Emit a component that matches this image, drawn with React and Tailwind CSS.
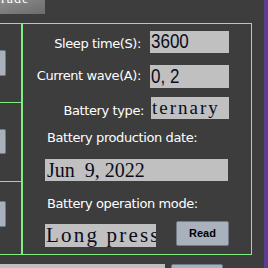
export default function App() {
  return (
    <div className="w-[268px] h-[268px] overflow-hidden bg-[#3d3d3d] flex font-['DejaVu_Sans',sans-serif]">
      <div className="w-[264px] flex flex-col">
        <div className="h-[23px] shrink-0">
          <div className="w-[45px] h-[14px] bg-gradient-to-br from-[#8c8c8c] to-[#6c6c6c] overflow-hidden">
            <div className="-mt-[8px] pl-[1px] text-white text-[14px] leading-[14px] tracking-[1px] font-['Liberation_Serif',serif]">rade</div>
          </div>
        </div>
        <div className="w-[252px] h-[232px] shrink-0 border-t border-r border-b border-[#80ee80] flex">
          <div className="w-[23px] border-r-2 border-[#80ee80] flex flex-col">
            <div className="h-[79px] border-b border-[#80ee80]">
              <div className="mt-[26px] h-[26px] w-[6px] bg-[#a9b1bd] border-y border-r border-[#727b88] rounded-r-[2px]" />
            </div>
            <div className="h-[79px] border-b border-[#80ee80]">
              <div className="mt-[26px] h-[25px] w-[6px] bg-[#a9b1bd] border-y border-r border-[#727b88] rounded-r-[2px]" />
            </div>
            <div className="flex-1">
              <div className="mt-[19px] h-[26px] w-[6px] bg-[#a9b1bd] border-y border-r border-[#727b88] rounded-r-[2px]" />
            </div>
          </div>
          <div className="flex-1 flex flex-col text-white text-[13px] tracking-[-0.4px]">
            <div className="mt-[7px] flex items-start h-[22px]">
              <div className="w-[118px] mt-[3px] text-right leading-[20px] whitespace-nowrap">Sleep time(S):</div>
              <div className="ml-[9px] w-[79px] h-[22px] bg-[#c0c0c0] text-[#0c0c1c] pl-[1px] text-[17px] leading-[22px] tracking-normal font-['Liberation_Sans',sans-serif]">
                <span className="inline-block scale-y-[1.2]">3600</span>
              </div>
            </div>
            <div className="mt-[12px] flex items-start h-[23px]">
              <div className="w-[118px] mt-[1px] text-right leading-[20px] whitespace-nowrap">Current wave(A):</div>
              <div className="ml-[9px] w-[79px] h-[23px] bg-[#c0c0c0] text-[#0c0c1c] pl-[1px] text-[17px] leading-[23px] tracking-normal font-['Liberation_Sans',sans-serif]">
                <span className="inline-block scale-y-[1.2] whitespace-pre">0, 2</span>
              </div>
            </div>
            <div className="mt-[9px] flex items-start h-[22px]">
              <div className="w-[121px] mt-[4px] text-right leading-[20px] whitespace-nowrap">Battery type:</div>
              <div className="ml-[7px] w-[78px] h-[22px] bg-[#c0c0c0] text-[#0c0c1c] pl-[1px] text-[19px] leading-[22px] tracking-[2px] font-['Liberation_Serif',serif] overflow-hidden whitespace-nowrap">ternary</div>
            </div>
            <div className="mt-[9px] pl-[24px] leading-[20px] whitespace-nowrap">Battery production date:</div>
            <div className="mt-[11px] ml-[22px] w-[183px] h-[22px] bg-[#c0c0c0] text-[#0c0c1c] pl-[2px] text-[20px] leading-[22px] tracking-normal font-['Liberation_Serif',serif] whitespace-pre overflow-hidden">Jun  9, 2022</div>
            <div className="mt-[13px] pl-[24px] leading-[20px] whitespace-nowrap">Battery operation mode:</div>
            <div className="mt-[7px] flex items-start">
              <div className="ml-[22px] mt-[3px] w-[111px] h-[23px] bg-[#c0c0c0] text-[#0c0c1c] pl-[1px] text-[21px] leading-[23px] tracking-[2.2px] font-['Liberation_Serif',serif] whitespace-pre overflow-hidden">Long press</div>
              <div className="ml-[20px] w-[53px] h-[25px] bg-[#a9b1bd] border border-[#727b88] rounded-[2px] flex items-center justify-center text-black text-[11px] font-bold tracking-normal font-['Liberation_Sans',sans-serif]">Read</div>
            </div>
          </div>
        </div>
        <div className="mt-[9px] flex">
          <div className="w-[165px] h-[20px] bg-[#c0c0c0]" />
          <div className="ml-[6px] w-[52px] h-[20px] bg-[#a9b1bd] border border-[#727b88] rounded-[2px]" />
        </div>
      </div>
      <div className="w-[4px] bg-[#5a3d8c]" />
    </div>
  );
}
